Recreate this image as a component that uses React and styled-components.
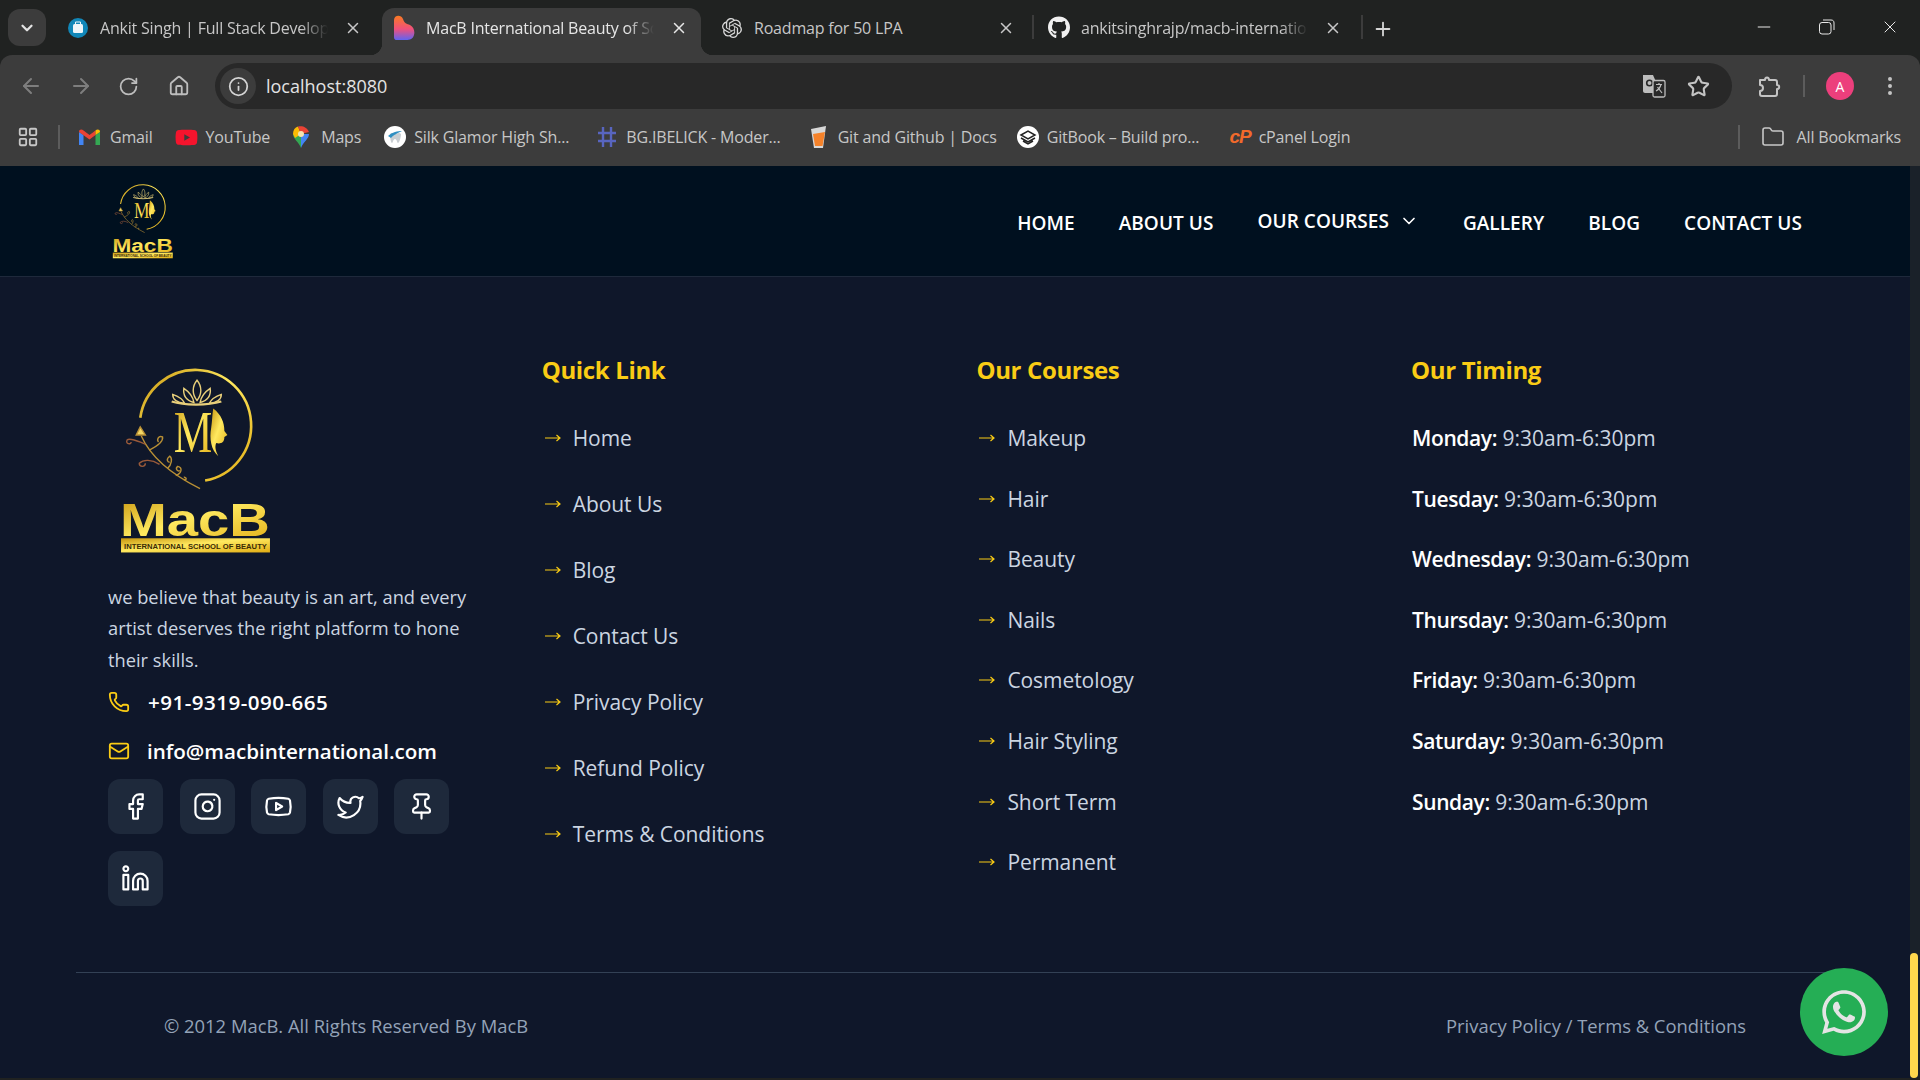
import styled, { createGlobalStyle } from "styled-components";
import {
  ChevronDown,
  X,
  Plus,
  ArrowLeft,
  ArrowRight,
  RotateCw,
  Home,
  Info,
  Star,
  EllipsisVertical,
  LayoutGrid,
  Folder,
  Minus,
  Phone,
  Mail,
  Facebook,
  Instagram,
  Youtube,
  Twitter,
  Pin,
  Linkedin,
} from "lucide-react";
import { FaGithub, FaWhatsapp, FaYoutube } from "react-icons/fa";
import { SiOpenai } from "react-icons/si";

const GlobalStyle = createGlobalStyle`
  html, body {
    margin: 0;
    height: 100%;
    overflow: hidden;
    background: #0f172a;
    font-family: "Open Sans", "Noto Sans", sans-serif;
  }
  * { box-sizing: border-box; }
`;

/* browser chrome */
const Window = styled.div`
  width: 1920px;
  height: 1080px;
  padding-bottom: 2px;
  background: #202221;
  display: flex;
  flex-direction: column;
  position: relative;
  overflow: hidden;
`;

const TabStrip = styled.div`
  height: 55px;
  flex: none;
  background: #202221;
  display: flex;
  align-items: flex-end;
  color: #c7c7c7;
`;

const TabMenu = styled.div`
  width: 38px;
  height: 37px;
  margin: 0 10px 9px 8px;
  border-radius: 12px;
  background: #3c3c3c;
  color: #e3e3e3;
  display: flex;
  align-items: center;
  justify-content: center;
`;

const Tab = styled.div`
  position: relative;
  width: ${(p) => p.$w}px;
  height: 47px;
  padding: 0 ${(p) => p.$pr}px 8px ${(p) => p.$pl}px;
  display: flex;
  align-items: center;
  border-radius: 12px 12px 0 0;
  background: ${(p) => (p.$active ? "#3c3c3c" : "transparent")};
  color: ${(p) => (p.$active ? "#e6e6e6" : "#c7c7c7")};
  font-size: 16px;
  letter-spacing: -0.2px;
  ${(p) =>
    p.$active &&
    `
    &::before, &::after {
      content: "";
      position: absolute;
      bottom: 0;
      width: 12px;
      height: 12px;
    }
    &::before {
      left: -12px;
      background: radial-gradient(circle at 0 0, transparent 12px, #3c3c3c 12.5px);
    }
    &::after {
      right: -12px;
      background: radial-gradient(circle at 100% 0, transparent 12px, #3c3c3c 12.5px);
    }
  `}
`;

const FaviconSlot = styled.span`
  width: 22px;
  height: 22px;
  flex: none;
  display: flex;
  align-items: center;
  justify-content: center;
  margin-right: 11px;
`;

const TabTitle = styled.span`
  flex: 1;
  min-width: 0;
  white-space: nowrap;
  overflow: hidden;
  -webkit-mask-image: ${(p) =>
    p.$fade ? "linear-gradient(90deg, #000 88%, transparent 100%)" : "none"};
`;

const TabClose = styled(X)`
  flex: none;
  margin-left: 16px;
`;

const TabDivider = styled.div`
  width: 2px;
  height: 24px;
  margin-bottom: 16px;
  background: #3c3c3c;
`;

const NewTab = styled.div`
  margin: 0 0 15px 9px;
  display: flex;
  color: #d5d5d5;
`;

const WindowButtons = styled.div`
  margin-left: auto;
  align-self: flex-start;
  display: flex;
  align-items: center;
  gap: 43px;
  padding: 17px 20px 0 0;
  color: #e8e8e8;
`;

const Toolbar = styled.div`
  height: 55px;
  flex: none;
  background: #3c3c3c;
  border-radius: 12px 12px 0 0;
  display: flex;
  align-items: center;
  padding: 7px 16px 0 19px;
  color: #b6b6b6;
`;

const NavIcon = styled.span`
  width: ${(p) => p.$w || 50}px;
  display: flex;
  justify-content: flex-start;
  color: ${(p) => (p.$dim ? "#7e7e7e" : "#bdbdbd")};
`;

const Omnibox = styled.div`
  width: 1517px;
  height: 46px;
  margin-left: 7px;
  padding: 0 22px 0 5px;
  flex: none;
  border-radius: 23px;
  background: #282828;
  display: flex;
  align-items: center;
  color: #e3e3e3;
  font-size: 18px;
`;

const InfoChip = styled.span`
  width: 36px;
  height: 36px;
  border-radius: 50%;
  background: #3c3c3c;
  color: #d5d5d5;
  display: flex;
  align-items: center;
  justify-content: center;
  margin-right: 10px;
`;

const OmniActions = styled.div`
  margin-left: auto;
  display: flex;
  align-items: center;
  gap: 21px;
  color: #c4c4c4;
`;

const ToolActions = styled.div`
  flex: 1;
  display: flex;
  align-items: center;
  padding-left: 25px;
  color: #c4c4c4;
`;

const VSep = styled.div`
  width: 2px;
  height: ${(p) => p.$h || 22}px;
  background: #5c5c5c;
  margin: ${(p) => p.$m || "0 21px 0 22px"};
`;

const Avatar = styled.div`
  width: 28px;
  height: 28px;
  margin-right: 24px;
  border-radius: 50%;
  background: #ec3f7c;
  color: #fff;
  font-size: 14px;
  display: flex;
  align-items: center;
  justify-content: center;
`;

const BookmarkBar = styled.div`
  height: 56px;
  flex: none;
  background: #3c3c3c;
  display: flex;
  align-items: center;
  padding: 0 19px 2px 17px;
  color: #c7c7c7;
  font-size: 16px;
  letter-spacing: -0.17px;
`;

const Bookmark = styled.div`
  display: flex;
  align-items: center;
  gap: ${(p) => p.$g || 8}px;
  margin-right: ${(p) => p.$mr || 23}px;
  white-space: nowrap;
`;

const CpanelMark = styled.span`
  color: #f26a2b;
  font-family: "Liberation Sans", sans-serif;
  font-size: 19px;
  font-weight: 700;
  font-style: italic;
  letter-spacing: -1px;
`;

const AllBookmarks = styled.div`
  margin-left: auto;
  display: flex;
  align-items: center;
  gap: 12px;
`;

/* page */
const Viewport = styled.div`
  flex: 1;
  min-height: 0;
  display: flex;
`;

const Page = styled.div`
  flex: 1;
  min-width: 0;
  display: flex;
  flex-direction: column;
`;

const Scrollbar = styled.div`
  width: 10px;
  flex: none;
  background: #1a2129;
  display: flex;
  flex-direction: column;
  justify-content: flex-end;
`;

const Thumb = styled.div`
  width: 8px;
  height: 125px;
  border-radius: 5px;
  background: #ffd84d;
`;

const Header = styled.header`
  height: 111px;
  flex: none;
  background: #00101f;
  border-bottom: 1px solid #1e293b;
  display: flex;
  align-items: center;
  justify-content: space-between;
  padding: 0 108px 0 112px;
`;

const HeaderLogo = styled.div`
  display: flex;
`;

const Menu = styled.nav`
  display: flex;
  align-items: center;
  gap: 44px;
  margin-top: 3px;
`;

const MenuItem = styled.a`
  color: #fff;
  font-size: 19px;
  font-weight: 600;
  letter-spacing: 0.05px;
  display: flex;
  align-items: center;
  gap: 10px;
  margin-top: ${(p) => (p.$raised ? "-4px" : "0")};
`;

const Footer = styled.footer`
  flex: 1;
  min-height: 0;
  background: #0f172a;
  display: flex;
  flex-direction: column;
`;

const Columns = styled.div`
  flex: 1;
  display: grid;
  grid-template-columns: repeat(4, 434.7px);
  padding: 76px 0 0 108px;
`;

const Brand = styled.div`
  display: flex;
  flex-direction: column;
  padding-right: 40px;
`;

const BrandLogo = styled.div`
  display: flex;
  margin: 10px 0 25px 11px;
`;

const About = styled.p`
  margin: 0;
  color: #cbd5e1;
  font-size: 18.3px;
  line-height: 31.5px;
`;

const ContactRow = styled.div`
  display: flex;
  align-items: center;
  gap: ${(p) => p.$g}px;
  height: 32px;
  margin-top: ${(p) => p.$mt}px;
  color: #fff;
  font-size: 20.6px;
  font-weight: 600;
  letter-spacing: ${(p) => p.$ls || 0}px;
  svg {
    color: #facc15;
    flex: none;
  }
`;

const Socials = styled.div`
  display: flex;
  flex-wrap: wrap;
  gap: 17px 16.5px;
  margin-top: 12px;
`;

const SocialButton = styled.a`
  width: 55px;
  height: 55px;
  border-radius: 12px;
  background: #1e293b;
  color: #fff;
  display: flex;
  align-items: center;
  justify-content: center;
`;

const Heading = styled.h3`
  margin: 0 0 35px -1px;
  color: #facc15;
  font-size: 24px;
  line-height: 34px;
  font-weight: 700;
  letter-spacing: -0.35px;
`;

const List = styled.ul`
  margin: 0;
  padding: 0;
  list-style: none;
  display: flex;
  flex-direction: column;
  gap: ${(p) => p.$gap}px;
`;

const LinkRow = styled.li`
  display: flex;
  align-items: center;
  height: 32px;
  color: #cbd5e1;
  font-size: 21px;
  letter-spacing: -0.06px;
`;

const ArrowBox = styled.span`
  width: 30px;
  flex: none;
  display: flex;
  align-items: center;
  padding-left: 2px;
  color: #facc15;
`;

const TimeRow = styled.li`
  height: 32px;
  line-height: 32px;
  color: #cbd5e1;
  font-size: 21px;
  b {
    color: #fff;
    font-weight: 600;
    letter-spacing: -0.4px;
  }
`;

const BottomBar = styled.div`
  flex: none;
  margin: 0 76px;
  height: 106px;
  border-top: 1px solid #334155;
  display: flex;
  align-items: center;
  justify-content: space-between;
  padding: 0 88px;
  color: #94a3b8;
  font-size: 18.4px;
`;

const WhatsApp = styled.a`
  position: absolute;
  left: 1800px;
  top: 968px;
  width: 88px;
  height: 88px;
  border-radius: 50%;
  background: #25ae55;
  color: #e4e4e4;
  display: flex;
  align-items: center;
  justify-content: center;
`;

function MacBLogo({ width, id }) {
  return (
    <svg width={width} viewBox="20 12 152 190" fill="none">
      <defs>
        <linearGradient id={id} x1="0" y1="0" x2="1" y2="1">
          <stop offset="0" stopColor="#c8960f" />
          <stop offset="0.45" stopColor="#ffe95f" />
          <stop offset="1" stopColor="#e0ac14" />
        </linearGradient>
      </defs>
      <path
        d="M41 66 A55 55 0 1 1 105 128"
        stroke={`url(#${id})`}
        strokeWidth="2.6"
      />
      {/* crown */}
      <g stroke="#e8cf7a" strokeWidth="1.4" fill="none" transform="translate(0 3)">
        <path d="M72 47 C84 51 108 51 121 47" strokeWidth="2.2" />
        <path d="M97 26 C92 32 92 40 97 46 C102 40 102 32 97 26 Z" />
        <path d="M84 34 C83 41 87 46 94 48 C93 42 90 38 84 34 Z" />
        <path d="M110 34 C111 41 107 46 100 48 C101 42 104 38 110 34 Z" />
        <path d="M73 40 C73 45 78 48 85 49 C83 45 79 42 73 40 Z" />
        <path d="M121 40 C121 45 116 48 109 49 C111 45 115 42 121 40 Z" />
      </g>
      {/* letter M */}
      <text
        x="74"
        y="100"
        fontFamily="Liberation Serif, serif"
        fontSize="58"
        textLength="38"
        lengthAdjust="spacingAndGlyphs"
        fill={`url(#${id})`}
      >
        M
      </text>
      {/* face */}
      <path
        d="M113 57 C121 63 124 71 124 79 L127 83 L124 85 C124 91 120 92 116 91 C114 95 116 100 118 104 C111 98 109 87 111 76 C112 70 112 63 113 57 Z"
        fill={`url(#${id})`}
      />
      {/* branch */}
      <g stroke="#b88f35" strokeWidth="1.4">
        <path d="M42 84 C50 102 68 120 100 136" />
        <path d="M41 75 L37 83 L46 83 Z" fill="#f3d765" />
        <path d="M46 92 C40 90 31 85 28 88 C26 92 32 93 32 90" stroke="#9a5a3a" />
        <path d="M50 98 C58 94 64 90 63 85 C59 83 57 88 59 90" />
        <path d="M60 112 C52 107 44 107 40 111 C40 115 46 115 46 111" stroke="#9a5a3a" />
        <path d="M68 116 C72 112 73 106 70 104 C66 107 68 110 70 110" />
        <path d="M76 123 C82 121 83 115 78 114 C75 116 78 120 80 118" />
        <path d="M84 127 C88 128 86 124 84 125" />
      </g>
      <text
        x="21"
        y="183"
        fontFamily="Liberation Sans, sans-serif"
        fontSize="45"
        fontWeight="700"
        textLength="148"
        lengthAdjust="spacingAndGlyphs"
        fill={`url(#${id})`}
      >
        MacB
      </text>
      <rect x="22" y="185" width="147" height="14" fill={`url(#${id})`} />
      <text
        x="25"
        y="195.5"
        fontFamily="Liberation Sans, sans-serif"
        fontSize="8"
        fontWeight="700"
        textLength="141"
        lengthAdjust="spacingAndGlyphs"
        fill="#3b2c05"
      >
        INTERNATIONAL SCHOOL OF BEAUTY
      </text>
    </svg>
  );
}

/* favicons */
const BagIcon = () => (
  <svg width="20" height="22" viewBox="0 0 20 22">
    <circle cx="10" cy="11" r="10" fill="#1187b8" />
    <rect x="5" y="7" width="10" height="9" rx="1.5" fill="#eef6fa" />
    <path d="M7.5 7 V5 H12.5 V7" fill="none" stroke="#eef6fa" />
  </svg>
);

const HeartIcon = () => (
  <svg width="22" height="26" viewBox="0 0 22 26">
    <defs>
      <linearGradient id="heart" x1="0" y1="0" x2="0" y2="1">
        <stop offset="0" stopColor="#f97a22" />
        <stop offset="0.55" stopColor="#f0507c" />
        <stop offset="1" stopColor="#5f63f2" />
      </linearGradient>
    </defs>
    <path
      d="M1 5 C1 0 8 -1 10 4 C11 8 14 9 17 10 C21 12 22 17 21 20 C20 24 17 25 13 25 L4 25 C1 25 1 23 1 21 Z"
      fill="url(#heart)"
    />
  </svg>
);

const GmailIcon = () => (
  <svg width="21" height="16" viewBox="0 0 21 16">
    <path d="M0 3 L0 16 L4.5 16 L4.5 6 Z" fill="#4285f4" />
    <path d="M16.5 6 L16.5 16 L21 16 L21 3 Z" fill="#34a853" />
    <path d="M0 3 C0 0 3 0 4.5 1.5 L10.5 6 L16.5 1.5 L16.5 6 L10.5 10.5 L0 3 Z" fill="#ea4335" />
    <path d="M16.5 1.5 C18 0 21 0 21 3 L16.5 6 Z" fill="#fbbc04" />
  </svg>
);

const MapsIcon = () => (
  <svg width="16" height="22" viewBox="0 0 16 22">
    <path d="M8 22 C6 16 0 13 0 8 L8 8 Z" fill="#34a853" />
    <path d="M8 22 C10 16 16 13 16 8 L8 8 Z" fill="#4285f4" />
    <path d="M0 8 C0 4 2 1.5 5 .6 L8 8 L2 12 Z" fill="#fbbc04" />
    <path d="M5 .6 C9 -.6 14 1 16 6 L8 8 Z" fill="#ea4335" />
    <circle cx="8" cy="8" r="3" fill="#f4e3b0" />
  </svg>
);

const SilkIcon = () => (
  <svg width="22" height="22" viewBox="0 0 22 22">
    <circle cx="11" cy="11" r="11" fill="#fff" />
    <path d="M6 8 C8 6 10 8 11 8 C12 8 15 6 17 8 C17 12 15 17 14 17 C13 17 13 13 11 13 C9 13 9 17 8 17 C7 17 6 12 6 8 Z" fill="#c9ced2" />
    <path d="M4 10 C8 6 14 5 18 5 C14 7 9 9 7 12 Z" fill="#2f8fc2" />
  </svg>
);

const HashIcon = () => (
  <svg width="20" height="22" viewBox="0 0 20 22" stroke="#5865c0" strokeWidth="2.4">
    <path d="M6 1 V21 M14 1 V21 M1 7 H19 M1 15 H19" />
  </svg>
);

const CupIcon = () => (
  <svg width="17" height="24" viewBox="0 0 17 24">
    <path d="M1 4 L16 1 L13 23 L4 23 Z" fill="#d8d8d8" />
    <path d="M3 9 L15 7 L12.5 21 L5 21 Z" fill="#f5822a" />
  </svg>
);

const BookIcon = () => (
  <svg width="22" height="22" viewBox="0 0 22 22">
    <circle cx="11" cy="11" r="11" fill="#fff" />
    <path d="M4 9 L11 5 L18 9 L11 13 Z M4 12 L11 16 L18 12 M6 15 L11 18 L16 15" fill="none" stroke="#222" strokeWidth="1.5" />
  </svg>
);

const TranslateIcon = () => (
  <svg width="24" height="24" viewBox="0 0 24 24">
    <path d="M1 1 H11 L19 19 H3 C2 19 1 18 1 17 Z" fill="#bdbdbd" />
    <circle cx="7.5" cy="9" r="2.8" fill="none" stroke="#282828" strokeWidth="1.6" />
    <rect x="11" y="6.5" width="12" height="16.5" rx="1.5" fill="#282828" stroke="#bdbdbd" strokeWidth="1.3" />
    <path d="M14 10.5 H20 M17 9 V10.5 M19 10.5 C18 14 16 16 14 17 M15.5 13 L20 19" fill="none" stroke="#bdbdbd" strokeWidth="1.2" />
  </svg>
);

const PuzzleIcon = () => (
  <svg width="24" height="24" viewBox="0 0 24 24" fill="none" stroke="currentColor" strokeWidth="2" strokeLinejoin="round">
    <path d="M3 6 H8 C8 2.5 12 2.5 12 6 H18 C19 6 20 7 20 8 V11 C23 11 23 15 20 15 V20 C20 21 19 22 18 22 H5 C4 22 3 21 3 20 V17 C7 17 7 11 3 11 Z" />
  </svg>
);

const RestoreIcon = () => (
  <svg width="16" height="16" viewBox="0 0 16 16" fill="none" stroke="currentColor" strokeWidth="1" style={{ margin: "0 2px" }}>
    <rect x=".5" y="3.5" width="11.5" height="11.5" rx="2.5" />
    <path d="M4 1 H12 C14 1 15 2 15 4 V11" />
  </svg>
);

const ThinArrow = () => (
  <svg width="16" height="10" viewBox="0 0 16 10" fill="none" stroke="currentColor" strokeWidth="1.2">
    <path d="M0 5 H15 M11.5 2 L15 5 L11.5 8" />
  </svg>
);

const quickLinks = [
  "Home",
  "About Us",
  "Blog",
  "Contact Us",
  "Privacy Policy",
  "Refund Policy",
  "Terms & Conditions",
];
const courses = [
  "Makeup",
  "Hair",
  "Beauty",
  "Nails",
  "Cosmetology",
  "Hair Styling",
  "Short Term",
  "Permanent",
];
const days = ["Monday", "Tuesday", "Wednesday", "Thursday", "Friday", "Saturday", "Sunday"];
const socials = [Facebook, Instagram, Youtube, Twitter, Pin, Linkedin];

export default function App() {
  return (
    <Window>
      <GlobalStyle />
      <TabStrip>
        <TabMenu>
          <ChevronDown size={18} strokeWidth={3} />
        </TabMenu>
        <Tab $w={326} $pl={11} $pr={20}>
          <FaviconSlot><BagIcon /></FaviconSlot>
          <TabTitle $fade>Ankit Singh | Full Stack Developer</TabTitle>
          <TabClose size={18} />
        </Tab>
        <Tab $active $w={319} $pl={11} $pr={13}>
          <FaviconSlot><HeartIcon /></FaviconSlot>
          <TabTitle $fade>MacB International Beauty of School</TabTitle>
          <TabClose size={18} />
        </Tab>
        <Tab $w={331} $pl={20} $pr={17}>
          <FaviconSlot><SiOpenai size={20} color="#d8d8d8" /></FaviconSlot>
          <TabTitle>Roadmap for 50 LPA</TabTitle>
          <TabClose size={18} />
        </Tab>
        <TabDivider />
        <Tab $w={327} $pl={14} $pr={19}>
          <FaviconSlot><FaGithub size={23} color="#f0f0f0" /></FaviconSlot>
          <TabTitle $fade>ankitsinghrajp/macb-international</TabTitle>
          <TabClose size={18} />
        </Tab>
        <TabDivider />
        <NewTab><Plus size={22} /></NewTab>
        <WindowButtons>
          <Minus size={20} strokeWidth={1.2} />
          <RestoreIcon />
          <X size={20} strokeWidth={1.2} />
        </WindowButtons>
      </TabStrip>

      <Toolbar>
        <NavIcon $dim><ArrowLeft size={24} /></NavIcon>
        <NavIcon $dim $w={49}><ArrowRight size={24} /></NavIcon>
        <NavIcon $w={50}><RotateCw size={21} /></NavIcon>
        <NavIcon $w={40}><Home size={22} /></NavIcon>
        <Omnibox>
          <InfoChip><Info size={21} /></InfoChip>
          localhost:8080
          <OmniActions>
            <TranslateIcon />
            <Star size={23} strokeWidth={2.2} />
          </OmniActions>
        </Omnibox>
        <ToolActions>
          <PuzzleIcon />
          <VSep />
          <Avatar>A</Avatar>
          <EllipsisVertical size={24} />
        </ToolActions>
      </Toolbar>

      <BookmarkBar>
        <LayoutGrid size={22} />
        <VSep $h={24} $m="0 19px 0 19px" />
        <Bookmark $g={10} $mr={22}><GmailIcon />Gmail</Bookmark>
        <Bookmark><FaYoutube size={23} color="#f5142d" />YouTube</Bookmark>
        <Bookmark $g={12}><MapsIcon />Maps</Bookmark>
        <Bookmark $mr={28}><SilkIcon />Silk Glamor High Sh...</Bookmark>
        <Bookmark $g={9} $mr={29}><HashIcon />BG.IBELICK - Moder...</Bookmark>
        <Bookmark $g={11} $mr={20}><CupIcon />Git and Github | Docs</Bookmark>
        <Bookmark $mr={30}><BookIcon />GitBook – Build pro...</Bookmark>
        <Bookmark $mr={1} $g={8}><CpanelMark>cP</CpanelMark>cPanel Login</Bookmark>
        <AllBookmarks>
          <VSep $h={24} $m="0 9px 0 0" />
          <Folder size={24} strokeWidth={1.6} />
          All Bookmarks
        </AllBookmarks>
      </BookmarkBar>

      <Viewport>
        <Page>
          <Header>
            <HeaderLogo><MacBLogo width={62} id="gold-nav" /></HeaderLogo>
            <Menu>
              <MenuItem>HOME</MenuItem>
              <MenuItem>ABOUT US</MenuItem>
              <MenuItem $raised>
                OUR COURSES <ChevronDown size={20} />
              </MenuItem>
              <MenuItem>GALLERY</MenuItem>
              <MenuItem>BLOG</MenuItem>
              <MenuItem>CONTACT US</MenuItem>
            </Menu>
          </Header>
          <Footer>
            <Columns>
              <Brand>
                <BrandLogo><MacBLogo width={154} id="gold-footer" /></BrandLogo>
                <About>
                  we believe that beauty is an art, and every artist deserves the
                  right platform to hone their skills.
                </About>
                <ContactRow $g={18} $mt={11} $ls={0.45}>
                  <Phone size={22} />
                  +91-9319-090-665
                </ContactRow>
                <ContactRow $g={17} $mt={17}>
                  <Mail size={22} />
                  info@macbinternational.com
                </ContactRow>
                <Socials>
                  {socials.map((Icon, i) => (
                    <SocialButton key={i}>
                      <Icon size={29} strokeWidth={1.8} />
                    </SocialButton>
                  ))}
                </Socials>
              </Brand>
              <div>
                <Heading>Quick Link</Heading>
                <List $gap={34}>
                  {quickLinks.map((t) => (
                    <LinkRow key={t}><ArrowBox><ThinArrow /></ArrowBox>{t}</LinkRow>
                  ))}
                </List>
              </div>
              <div>
                <Heading>Our Courses</Heading>
                <List $gap={28.6}>
                  {courses.map((t) => (
                    <LinkRow key={t}><ArrowBox><ThinArrow /></ArrowBox>{t}</LinkRow>
                  ))}
                </List>
              </div>
              <div>
                <Heading>Our Timing</Heading>
                <List $gap={28.6}>
                  {days.map((d) => (
                    <TimeRow key={d}><b>{d}:</b> 9:30am-6:30pm</TimeRow>
                  ))}
                </List>
              </div>
            </Columns>
            <BottomBar>
              <span>© 2012 MacB. All Rights Reserved By MacB</span>
              <span>Privacy Policy / Terms &amp; Conditions</span>
            </BottomBar>
          </Footer>
        </Page>
        <Scrollbar><Thumb /></Scrollbar>
      </Viewport>
      <WhatsApp><FaWhatsapp size={50} /></WhatsApp>
    </Window>
  );
}
